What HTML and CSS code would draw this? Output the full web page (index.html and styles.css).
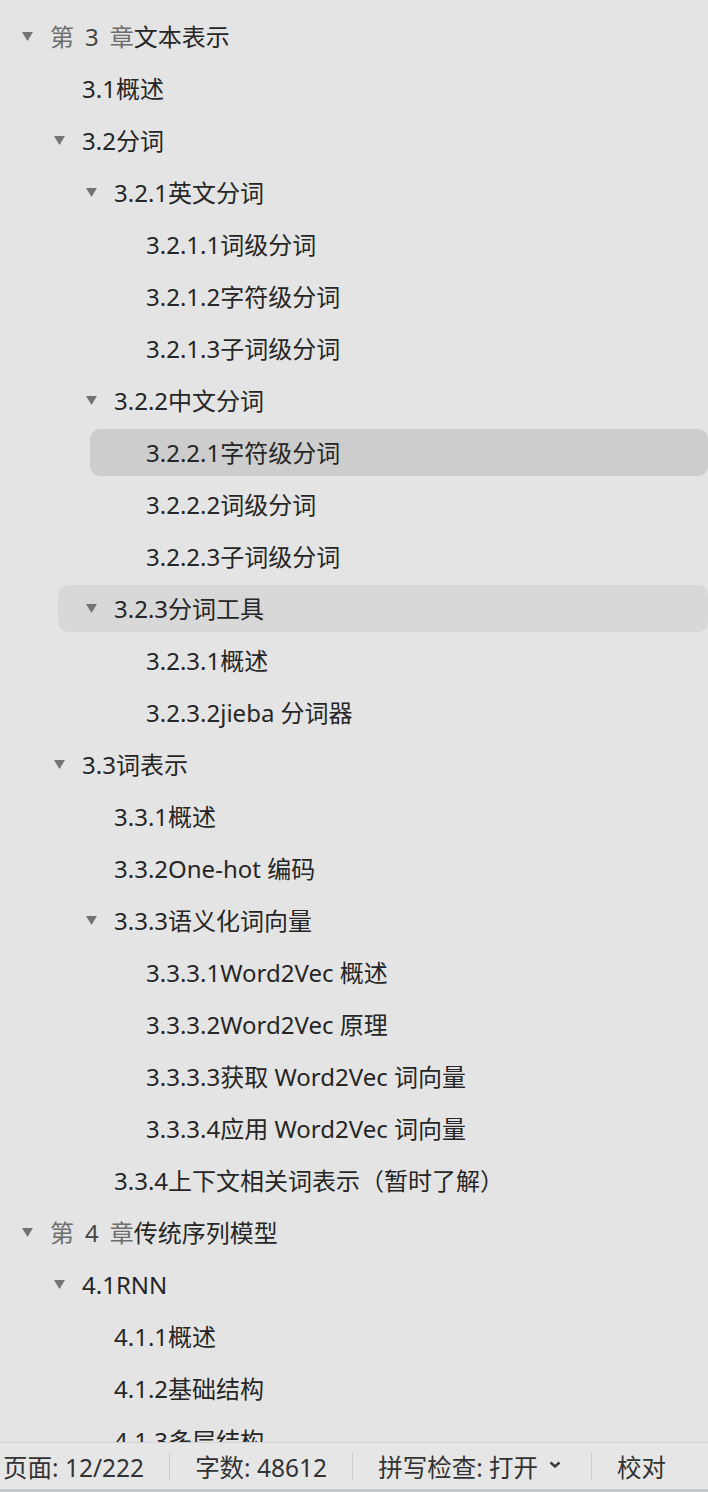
FILE: index.html
```html
<!DOCTYPE html>
<html lang="zh-CN">
<head>
<meta charset="utf-8">
<title>导航窗格</title>
<link rel="stylesheet" href="styles.css">
</head>
<body>
<div class="pane">
  <div class="tree">
    <div class="row l0"><span class="tog"><svg viewBox="0 0 11 9"><polygon points="0,0 11,0 5.5,9"/></svg></span><span class="t"><span class="pre">第</span><span class="num">3</span><span class="pre">章</span>文本表示</span></div>
    <div class="row l1"><span class="tog"></span><span class="t">3.1概述</span></div>
    <div class="row l1"><span class="tog"><svg viewBox="0 0 11 9"><polygon points="0,0 11,0 5.5,9"/></svg></span><span class="t">3.2分词</span></div>
    <div class="row l2"><span class="tog"><svg viewBox="0 0 11 9"><polygon points="0,0 11,0 5.5,9"/></svg></span><span class="t">3.2.1英文分词</span></div>
    <div class="row l3"><span class="tog"></span><span class="t">3.2.1.1词级分词</span></div>
    <div class="row l3"><span class="tog"></span><span class="t">3.2.1.2字符级分词</span></div>
    <div class="row l3"><span class="tog"></span><span class="t">3.2.1.3子词级分词</span></div>
    <div class="row l2"><span class="tog"><svg viewBox="0 0 11 9"><polygon points="0,0 11,0 5.5,9"/></svg></span><span class="t">3.2.2中文分词</span></div>
    <div class="row l3 selected"><span class="tog"></span><span class="t">3.2.2.1字符级分词</span></div>
    <div class="row l3"><span class="tog"></span><span class="t">3.2.2.2词级分词</span></div>
    <div class="row l3"><span class="tog"></span><span class="t">3.2.2.3子词级分词</span></div>
    <div class="row l2 hover"><span class="tog"><svg viewBox="0 0 11 9"><polygon points="0,0 11,0 5.5,9"/></svg></span><span class="t">3.2.3分词工具</span></div>
    <div class="row l3"><span class="tog"></span><span class="t">3.2.3.1概述</span></div>
    <div class="row l3"><span class="tog"></span><span class="t">3.2.3.2jieba 分词器</span></div>
    <div class="row l1"><span class="tog"><svg viewBox="0 0 11 9"><polygon points="0,0 11,0 5.5,9"/></svg></span><span class="t">3.3词表示</span></div>
    <div class="row l2"><span class="tog"></span><span class="t">3.3.1概述</span></div>
    <div class="row l2"><span class="tog"></span><span class="t">3.3.2One-hot 编码</span></div>
    <div class="row l2"><span class="tog"><svg viewBox="0 0 11 9"><polygon points="0,0 11,0 5.5,9"/></svg></span><span class="t">3.3.3语义化词向量</span></div>
    <div class="row l3"><span class="tog"></span><span class="t">3.3.3.1Word2Vec 概述</span></div>
    <div class="row l3"><span class="tog"></span><span class="t">3.3.3.2Word2Vec 原理</span></div>
    <div class="row l3"><span class="tog"></span><span class="t">3.3.3.3获取 Word2Vec 词向量</span></div>
    <div class="row l3"><span class="tog"></span><span class="t">3.3.3.4应用 Word2Vec 词向量</span></div>
    <div class="row l2"><span class="tog"></span><span class="t">3.3.4上下文相关词表示（暂时了解）</span></div>
    <div class="row l0"><span class="tog"><svg viewBox="0 0 11 9"><polygon points="0,0 11,0 5.5,9"/></svg></span><span class="t"><span class="pre">第</span><span class="num">4</span><span class="pre">章</span>传统序列模型</span></div>
    <div class="row l1"><span class="tog"><svg viewBox="0 0 11 9"><polygon points="0,0 11,0 5.5,9"/></svg></span><span class="t">4.1RNN</span></div>
    <div class="row l2"><span class="tog"></span><span class="t">4.1.1概述</span></div>
    <div class="row l2"><span class="tog"></span><span class="t">4.1.2基础结构</span></div>
    <div class="row l2 last"><span class="tog"></span><span class="t">4.1.3多层结构</span></div>
  </div>
  <div class="status">
    <span class="item first">页面: 12/222</span>
    <span class="sep"></span>
    <span class="item">字数: 48612</span>
    <span class="sep"></span>
    <span class="item">拼写检查: 打开</span>
    <span class="chev"><svg viewBox="0 0 12 7"><polyline points="1.5,1.5 6,5.5 10.5,1.5"/></svg></span>
    <span class="sep"></span>
    <span class="item">校对</span>
  </div>
</div>
</body>
</html>
```

FILE: styles.css
```css
html, body {
  margin: 0;
  padding: 0;
  background: #e4e4e4;
}

body {
  font-family: "Noto Sans", "Noto Sans CJK SC", sans-serif;
  color: #262626;
}

.pane {
  width: 708px;
  height: 1492px;
  display: flex;
  flex-direction: column;
  overflow: hidden;
}

.tree {
  flex: 1;
  overflow: hidden;
  padding-top: 13px;
}

.row {
  display: flex;
  align-items: center;
  height: 47px;
  margin-bottom: 5px;
  padding-left: 28px;
  padding-top: 1px;
  box-sizing: border-box;
  border-radius: 10px;
  font-size: 24px;
  white-space: nowrap;
}

.row.l0 { margin-left: -6px; }
.row.l1 { margin-left: 26px; }
.row.l2 { margin-left: 58px; }
.row.l3 { margin-left: 90px; }

.row.selected { background: #cdcdcd; }
.row.hover { background: #d8d8d8; }

.tog {
  width: 28px;
  flex: none;
  display: flex;
  align-items: center;
}

.tog svg {
  width: 11px;
  height: 9px;
  fill: #747474;
  margin-top: -2px;
}

.t {
  line-height: 30px;
}

.pre { color: #6e6e6e; }
.num {
  color: #454545;
  margin: 0 11px;
}

.status {
  flex: none;
  height: 50px;
  box-sizing: border-box;
  border-top: 1px solid #d2d2d2;
  border-bottom: 3px solid #c3c6ca;
  background: #e6e6e6;
  display: flex;
  align-items: center;
  font-size: 24.5px;
  color: #333333;
}

.item.first { padding-left: 3px; }

.sep {
  width: 1px;
  height: 27px;
  background: #cacaca;
  margin: 0 25px;
}

.chev {
  display: flex;
  margin-left: 11px;
  margin-right: 5px;
  margin-top: -4px;
}

.chev svg {
  width: 12px;
  height: 7px;
  fill: none;
  stroke: #3a3a3a;
  stroke-width: 2.4;
}
```
